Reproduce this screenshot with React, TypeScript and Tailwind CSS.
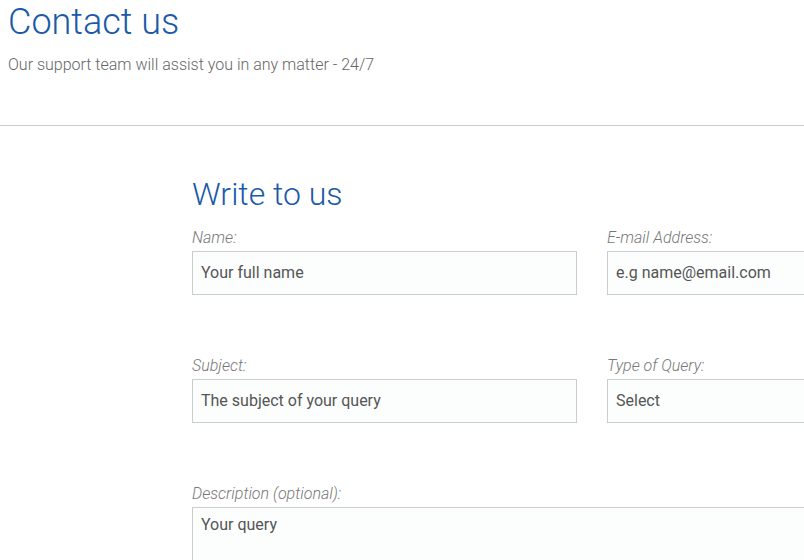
export default function App() {
  return (
    <div className="min-h-[560px] w-[804px] overflow-hidden bg-white font-['Roboto',sans-serif]">
      {/* Page header */}
      <div className="px-2 pt-0">
        <h1 className="text-[36px] leading-[44px] font-light text-[#1a5aa8]">Contact us</h1>
        <p className="mt-[10px] text-[16px] leading-[22px] font-light text-[#666]">
          Our support team will assist you in any matter - 24/7
        </p>
      </div>
      <hr className="mt-[49px] border-t border-[#cccccc]" />

      {/* Form */}
      <div className="ml-[192px] w-[800px] pt-[48px]">
        <h2 className="text-[32px] leading-[40px] font-light text-[#1a5aa8]">Write to us</h2>
        <div className="mt-[12px] grid grid-cols-[385px_385px] gap-x-[30px] gap-y-[59px]">
          <Field label="Name:" placeholder="Your full name" />
          <Field label="E-mail Address:" placeholder="e.g name@email.com" />
          <Field label="Subject:" placeholder="The subject of your query" />
          <Field label="Type of Query:" placeholder="Select" />
        </div>
        <div className="mt-[59px]">
          <label className="block text-[16px] leading-[24px] font-light italic text-[#777]">
            Description (optional):
          </label>
          <div className="mt-[1px] h-[100px] w-[800px] border border-[#cccccc] bg-[#fcfdfd] px-[8px] py-[6px] text-[16px] leading-[22px] text-[#555]">
            Your query
          </div>
        </div>
      </div>
    </div>
  );
}

function Field({ label, placeholder }: { label: string; placeholder: string }) {
  return (
    <div>
      <label className="block text-[16px] leading-[24px] font-light italic text-[#777]">{label}</label>
      <div className="mt-[1px] flex h-[44px] items-center border border-[#cccccc] bg-[#fcfdfd] px-[8px] text-[16px] text-[#555]">
        {placeholder}
      </div>
    </div>
  );
}
